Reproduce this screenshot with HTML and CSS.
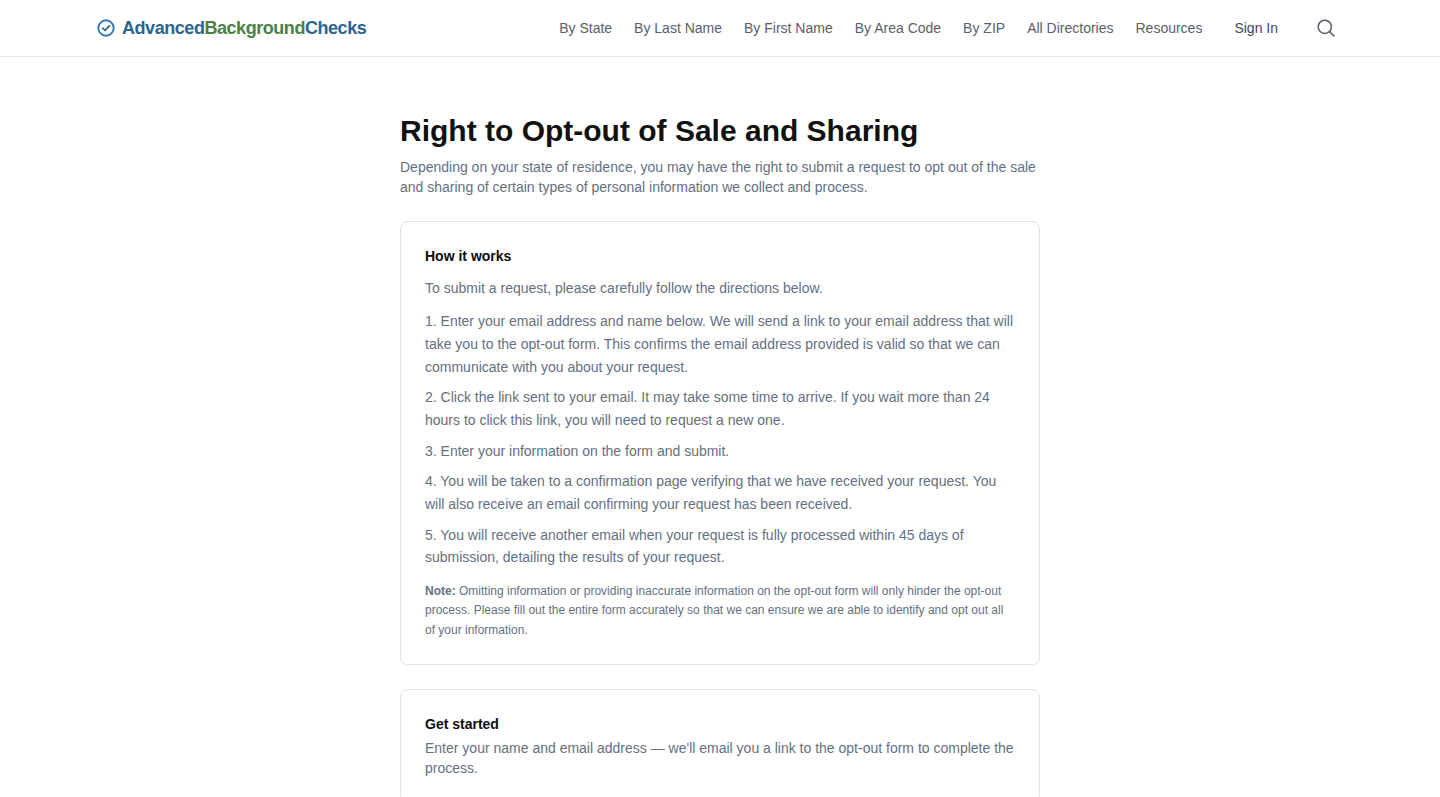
FILE: index.html
```html
<!DOCTYPE html>
<html lang="en">
<head>
<meta charset="utf-8">
<title>Right to Opt-out of Sale and Sharing</title>
<link rel="stylesheet" href="styles.css">
</head>
<body>
<header class="site-header">
  <a class="logo" href="#">
    <svg class="logo-icon" viewBox="0 0 18 18" width="18" height="18" fill="none" aria-hidden="true">
      <circle cx="9" cy="9" r="7.7" stroke="#2f77b5" stroke-width="1.9"/>
      <path d="M5.7 9.2 8 11.5 12.4 6.9" stroke="#2b6391" stroke-width="1.7" stroke-linecap="round" stroke-linejoin="round"/>
    </svg>
    <span class="logo-text"><span class="blue">Advanced</span><span class="green">Background</span><span class="blue">Checks</span></span>
  </a>
  <nav class="nav">
    <a href="#">By State</a>
    <a href="#">By Last Name</a>
    <a href="#">By First Name</a>
    <a href="#">By Area Code</a>
    <a href="#">By ZIP</a>
    <a href="#">All Directories</a>
    <a href="#">Resources</a>
  </nav>
  <a class="signin" href="#">Sign In</a>
  <svg class="search" viewBox="0 0 18 18" width="18" height="18" fill="none" aria-hidden="true">
    <circle cx="7.8" cy="7.8" r="6.6" stroke="#565f6c" stroke-width="1.5"/>
    <path d="M12.6 12.6 17 17" stroke="#565f6c" stroke-width="1.5" stroke-linecap="round"/>
  </svg>
</header>
<main class="main">
  <h1 class="title">Right to Opt-out of Sale and Sharing</h1>
  <p class="lead">Depending on your state of residence, you may have the right to submit a request to opt out of the sale and sharing of certain types of personal information we collect and process.</p>
  <section class="card">
    <h2 class="card-title">How it works</h2>
    <p class="intro">To submit a request, please carefully follow the directions below.</p>
    <p class="step">1. Enter your email address and name below. We will send a link to your email address that will take you to the opt-out form. This confirms the email address provided is valid so that we can communicate with you about your request.</p>
    <p class="step">2. Click the link sent to your email. It may take some time to arrive. If you wait more than 24 hours to click this link, you will need to request a new one.</p>
    <p class="step">3. Enter your information on the form and submit.</p>
    <p class="step">4. You will be taken to a confirmation page verifying that we have received your request. You will also receive an email confirming your request has been received.</p>
    <p class="step">5. You will receive another email when your request is fully processed within 45 days of submission, detailing the results of your request.</p>
    <p class="note"><strong>Note:</strong> Omitting information or providing inaccurate information on the opt-out form will only hinder the opt-out process. Please fill out the entire form accurately so that we can ensure we are able to identify and opt out all of your information.</p>
  </section>
  <section class="card">
    <h2 class="card-title tight">Get started</h2>
    <p class="lead">Enter your name and email address — we'll email you a link to the opt-out form to complete the process.</p>
  </section>
</main>
</body>
</html>
```
FILE: styles.css
```css
* { box-sizing: border-box; }
html, body { margin: 0; padding: 0; }
body {
  font-family: "Liberation Sans", Arial, sans-serif;
  color: #64707f;
  background: #fff;
  height: 797px;
  overflow: hidden;
}
a { text-decoration: none; color: inherit; }
.site-header {
  height: 57px;
  border-bottom: 1px solid #e5e7eb;
  display: flex;
  align-items: center;
  padding: 0 105px 0 97px;
}
.logo { display: flex; align-items: center; gap: 7px; }
.logo-icon { display: block; }
.logo-text { font-size: 18px; font-weight: 700; letter-spacing: -0.025em; }
.blue { color: #2b6391; }
.green { color: #4a7f45; }
.nav {
  margin-left: auto;
  display: flex;
  gap: 22px;
  font-size: 14px;
  color: #56616e;
}
.signin { margin-left: 32px; font-size: 14px; color: #3f4854; }
.search { margin-left: 39px; display: block; }
.main { width: 640px; margin: 0 auto; padding-top: 56px; }
.title {
  margin: 0 0 8px;
  font-size: 30px;
  line-height: 36px;
  font-weight: 700;
  color: #111;
}
.lead { margin: 0; font-size: 14px; line-height: 20px; }
.card {
  margin-top: 24px;
  border: 1px solid #e0e2e6;
  border-radius: 8px;
  padding: 24px;
}
.card-title {
  margin: 0 0 11px;
  font-size: 14px;
  line-height: 20px;
  font-weight: 700;
  color: #0d0d0d;
}
.card-title.tight { margin-bottom: 4px; }
.intro { margin: 0 0 10.25px; font-size: 14px; line-height: 22.75px; }
.step { margin: 0 0 7.9px; font-size: 14px; line-height: 22.75px; }
.note { margin: 12.75px 0 -0.5px; font-size: 12px; line-height: 19.5px; }
```
